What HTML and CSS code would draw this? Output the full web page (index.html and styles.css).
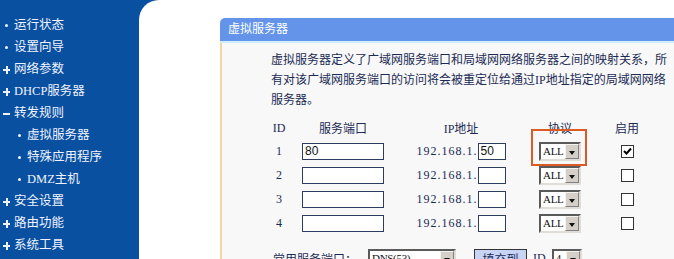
FILE: index.html
```html
<!DOCTYPE html>
<html lang="zh-CN">
<head>
    <meta charset="UTF-8">
    <title>虚拟服务器</title>
    <link rel="stylesheet" href="styles.css">
</head>
<body>
    <div class="sidebar">
        <ul class="menu">
            <li><span class="ico dot"></span>运行状态</li>
            <li><span class="ico dot"></span>设置向导</li>
            <li><span class="ico plus"></span>网络参数</li>
            <li><span class="ico plus"></span>DHCP服务器</li>
            <li><span class="ico minus"></span>转发规则</li>
            <li class="sub"><span class="ico dot"></span>虚拟服务器</li>
            <li class="sub"><span class="ico dot"></span>特殊应用程序</li>
            <li class="sub"><span class="ico dot"></span>DMZ主机</li>
            <li><span class="ico plus"></span>安全设置</li>
            <li><span class="ico plus"></span>路由功能</li>
            <li><span class="ico plus"></span>系统工具</li>
        </ul>
    </div>
    <div class="main">
        <div class="panel">
            <div class="panel-title">虚拟服务器</div>
            <div class="panel-body">
                <p class="intro">虚拟服务器定义了广域网服务端口和局域网网络服务器之间的映射关系，所<br>有对该广域网服务端口的访问将会被重定位给通过IP地址指定的局域网网络<br>服务器。</p>

                <div class="rules">
                    <div class="hd">ID</div>
                    <div class="hd">服务端口</div>
                    <div class="hd">IP地址</div>
                    <div class="hd">协议</div>
                    <div class="hd">启用</div>

                    <div>1</div>
                    <div><input class="port" type="text" value="80"></div>
                    <div class="ip"><span class="ip-pre">192.168.1.</span><input class="host" type="text" value="50"></div>
                    <div><span class="sel proto"><span class="sel-val">ALL</span><span class="sel-btn"></span></span></div>
                    <div><span class="check on"><svg width="9" height="9" viewBox="0 0 9 9"><path d="M1 4 L3.5 6.5 L8 1.5" fill="none" stroke="#000" stroke-width="2"/></svg></span></div>

                    <div>2</div>
                    <div><input class="port" type="text" value=""></div>
                    <div class="ip"><span class="ip-pre">192.168.1.</span><input class="host" type="text" value=""></div>
                    <div><span class="sel proto"><span class="sel-val">ALL</span><span class="sel-btn"></span></span></div>
                    <div><span class="check"></span></div>

                    <div>3</div>
                    <div><input class="port" type="text" value=""></div>
                    <div class="ip"><span class="ip-pre">192.168.1.</span><input class="host" type="text" value=""></div>
                    <div><span class="sel proto"><span class="sel-val">ALL</span><span class="sel-btn"></span></span></div>
                    <div><span class="check"></span></div>

                    <div>4</div>
                    <div><input class="port" type="text" value=""></div>
                    <div class="ip"><span class="ip-pre">192.168.1.</span><input class="host" type="text" value=""></div>
                    <div><span class="sel proto"><span class="sel-val">ALL</span><span class="sel-btn"></span></span></div>
                    <div><span class="check"></span></div>

                    <div class="mark"></div>
                </div>

                <div class="common">
                    <span class="common-label">常用服务端口：</span>
                    <span class="sel svc"><span class="sel-val">DNS(53)</span><span class="sel-btn"></span></span>
                    <button class="fill">填充到</button>
                    <span class="id-label">ID</span>
                    <span class="sel idsel"><span class="sel-val">4</span><span class="sel-btn"></span></span>
                </div>
            </div>
        </div>
    </div>
</body>
</html>
```

FILE: styles.css
```css
body {
    margin: 0;
    height: 259px;
    overflow: hidden;
    display: flex;
    background-color: #0a50a0;
    font-family: "Liberation Serif", "Noto Sans CJK SC", serif;
    font-size: 12px;
}
.sidebar {
    width: 139px;
    flex-shrink: 0;
    color: #eef3ff;
}
.menu {
    list-style: none;
    margin: 0;
    padding: 14px 0 0 2px;
}
.menu li {
    height: 22px;
    line-height: 22px;
    display: flex;
    align-items: center;
    gap: 2px;
    white-space: nowrap;
    font-size: 12.5px;
}
.menu li.sub {
    padding-left: 13px;
}
.ico {
    width: 10px;
    height: 10px;
    position: relative;
    flex-shrink: 0;
}
.ico.dot::before {
    content: "";
    position: absolute;
    left: 3px;
    top: 4px;
    width: 3px;
    height: 3px;
    border-radius: 50%;
    background-color: #eef3ff;
}
.ico.plus::before,
.ico.plus::after,
.ico.minus::before {
    content: "";
    position: absolute;
    background-color: #eef3ff;
}
.ico.plus::before,
.ico.minus::before {
    left: 1px;
    top: 5px;
    width: 7px;
    height: 2px;
}
.ico.plus::after {
    left: 4px;
    top: 2px;
    width: 2px;
    height: 8px;
}
.main {
    flex: 1;
    background-color: #fff;
    border-top-left-radius: 20px;
    padding: 18px 0 0 81px;
}
.panel {
    width: 480px;
}
.panel-title {
    height: 23px;
    line-height: 23px;
    padding-left: 8px;
    color: #fff;
    background-color: #6394ea;
    border-radius: 5px 5px 0 0;
    border-bottom: 2px solid #cfeefc;
}
.panel-body {
    border-left: 2px solid #f2d6a6;
    background-color: #f8f8f8;
    padding: 7px 0 20px 41px;
    color: #1b2b55;
}
.intro {
    margin: 0 0 7px 8px;
    line-height: 20px;
    white-space: nowrap;
}
.rules {
    position: relative;
    display: grid;
    grid-template-columns: 32px 96px 140px 58px 76px;
    grid-template-rows: 22px repeat(4, 24px);
    justify-items: center;
    align-items: center;
}
.ip {
    display: flex;
    align-items: center;
}
.ip-pre {
    letter-spacing: 1px;
}
input {
    box-sizing: border-box;
    height: 17px;
    border: 1px solid #2c3d60;
    background-color: #fff;
    font-family: "Liberation Sans", sans-serif;
    font-size: 12px;
    color: #111;
    padding: 0 2px;
    margin: 0;
}
.port {
    width: 82px;
}
.host {
    width: 28px;
}
.sel {
    box-sizing: border-box;
    display: inline-flex;
    height: 19px;
    border: 2px solid;
    border-color: #5a5a5a #e0ddd6 #e0ddd6 #5a5a5a;
    background-color: #fff;
    color: #111;
}
.sel-val {
    flex: 1;
    line-height: 15px;
    padding-left: 2px;
    font-size: 11px;
    letter-spacing: -0.3px;
    white-space: nowrap;
    overflow: hidden;
}
.sel-btn {
    width: 14px;
    flex-shrink: 0;
    background-color: #d4d0c8;
    border: 1px solid;
    border-color: #f4f2ee #808080 #808080 #f4f2ee;
    box-sizing: border-box;
    position: relative;
}
.sel-btn::after {
    content: "";
    position: absolute;
    left: 3px;
    top: 6px;
    border-left: 3.5px solid transparent;
    border-right: 3.5px solid transparent;
    border-top: 4px solid #111;
}
.proto {
    width: 42px;
}
.check {
    box-sizing: border-box;
    width: 13px;
    height: 13px;
    border: 1px solid #333;
    background-color: #fff;
    display: flex;
    align-items: center;
    justify-content: center;
}
.mark {
    position: absolute;
    left: 268px;
    top: 12px;
    width: 56px;
    height: 37px;
    box-sizing: border-box;
    border: 2px solid #dc5a26;
}
.common {
    display: flex;
    align-items: center;
    margin: 14px 0 0 10px;
}
.common-label {
    width: 95px;
}
.svc {
    width: 88px;
}
.fill {
    margin-left: 18px;
    height: 19px;
    width: 53px;
    padding: 0;
    font-family: "Liberation Serif", "Noto Sans CJK SC", serif;
    font-size: 12px;
    color: #1b2b55;
    background-color: #c8d4f6;
    border: 1px solid #333;
}
.id-label {
    margin: 0 6px;
}
.idsel {
    width: 30px;
}
```
